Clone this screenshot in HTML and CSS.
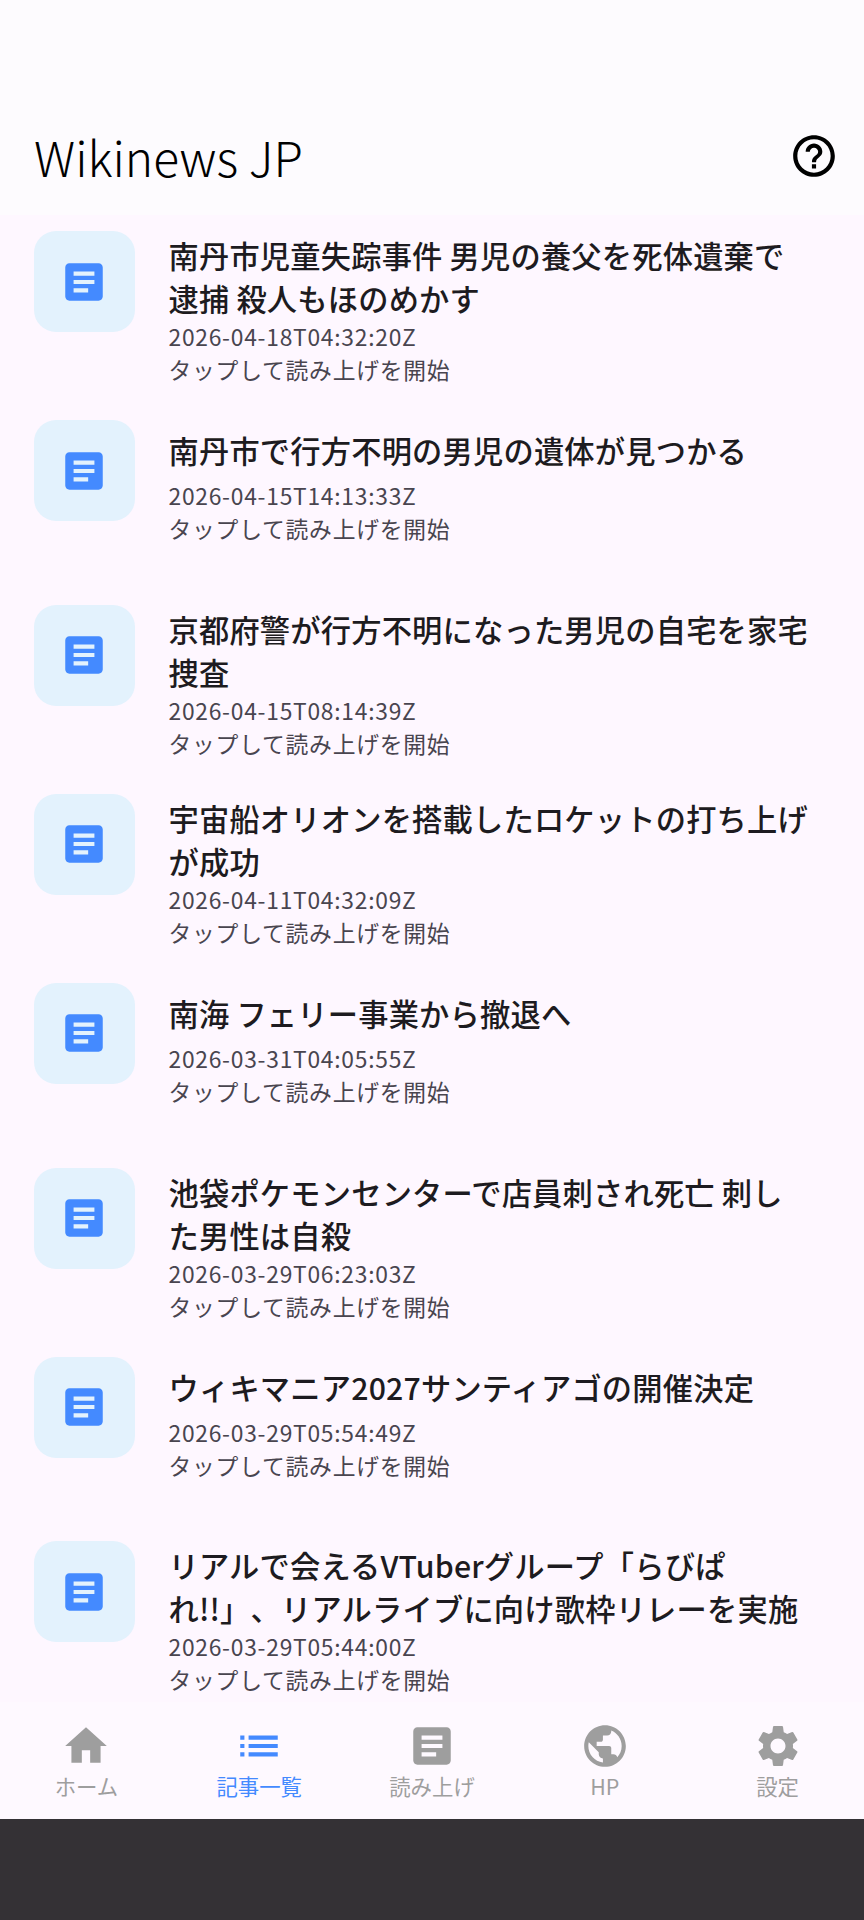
FILE: index.html
```html
<!DOCTYPE html>
<html lang="ja">
<head>
    <meta charset="UTF-8">
    <meta name="viewport" content="width=device-width, initial-scale=1.0">
    <title>Wikinews JP</title>
    <link rel="stylesheet" href="styles.css">
</head>
<body>
    <svg class="icon-defs" aria-hidden="true">
        <symbol id="icon-article" viewBox="0 0 24 24"><path d="M19 3H5c-1.1 0-2 .9-2 2v14c0 1.1.9 2 2 2h14c1.1 0 2-.9 2-2V5c0-1.1-.9-2-2-2zm-5 14H7v-2h7v2zm3-4H7v-2h10v2zm0-4H7V7h10v2z"/></symbol>
    </svg>

    <div class="app">
        <header class="app-bar">
            <h1 class="app-title">Wikinews JP</h1>
            <svg class="help-icon" viewBox="0 0 24 24"><path d="M11 18h2v-2h-2v2zm1-16C6.48 2 2 6.48 2 12s4.48 10 10 10 10-4.48 10-10S17.52 2 12 2zm0 18c-4.41 0-8-3.59-8-8s3.59-8 8-8 8 3.59 8 8-3.59 8-8 8zm0-14c-2.21 0-4 1.79-4 4h2c0-1.1.9-2 2-2s2 .9 2 2c0 2-3 1.75-3 5h2c0-2.25 3-2.5 3-5 0-2.21-1.79-4-4-4z"/></svg>
        </header>

        <main class="article-list">
            <article class="article">
                <div class="thumb"><svg class="thumb-icon"><use href="#icon-article"/></svg></div>
                <div class="article-body">
                    <h2 class="article-title">南丹市児童失踪事件 男児の養父を死体遺棄で逮捕 殺人もほのめかす</h2>
                    <p class="article-meta">2026-04-18T04:32:20Z</p>
                    <p class="article-meta">タップして読み上げを開始</p>
                </div>
            </article>
            <article class="article article-short">
                <div class="thumb"><svg class="thumb-icon"><use href="#icon-article"/></svg></div>
                <div class="article-body">
                    <h2 class="article-title">南丹市で行方不明の男児の遺体が見つかる</h2>
                    <p class="article-meta">2026-04-15T14:13:33Z</p>
                    <p class="article-meta">タップして読み上げを開始</p>
                </div>
            </article>
            <article class="article">
                <div class="thumb"><svg class="thumb-icon"><use href="#icon-article"/></svg></div>
                <div class="article-body">
                    <h2 class="article-title">京都府警が行方不明になった男児の自宅を家宅捜査</h2>
                    <p class="article-meta">2026-04-15T08:14:39Z</p>
                    <p class="article-meta">タップして読み上げを開始</p>
                </div>
            </article>
            <article class="article">
                <div class="thumb"><svg class="thumb-icon"><use href="#icon-article"/></svg></div>
                <div class="article-body">
                    <h2 class="article-title">宇宙船オリオンを搭載したロケットの打ち上げが成功</h2>
                    <p class="article-meta">2026-04-11T04:32:09Z</p>
                    <p class="article-meta">タップして読み上げを開始</p>
                </div>
            </article>
            <article class="article article-short">
                <div class="thumb"><svg class="thumb-icon"><use href="#icon-article"/></svg></div>
                <div class="article-body">
                    <h2 class="article-title">南海 フェリー事業から撤退へ</h2>
                    <p class="article-meta">2026-03-31T04:05:55Z</p>
                    <p class="article-meta">タップして読み上げを開始</p>
                </div>
            </article>
            <article class="article">
                <div class="thumb"><svg class="thumb-icon"><use href="#icon-article"/></svg></div>
                <div class="article-body">
                    <h2 class="article-title">池袋ポケモンセンターで店員刺され死亡 刺した男性は自殺</h2>
                    <p class="article-meta">2026-03-29T06:23:03Z</p>
                    <p class="article-meta">タップして読み上げを開始</p>
                </div>
            </article>
            <article class="article article-short">
                <div class="thumb"><svg class="thumb-icon"><use href="#icon-article"/></svg></div>
                <div class="article-body">
                    <h2 class="article-title">ウィキマニア2027サンティアゴの開催決定</h2>
                    <p class="article-meta">2026-03-29T05:54:49Z</p>
                    <p class="article-meta">タップして読み上げを開始</p>
                </div>
            </article>
            <article class="article">
                <div class="thumb"><svg class="thumb-icon"><use href="#icon-article"/></svg></div>
                <div class="article-body">
                    <h2 class="article-title">リアルで会えるVTuberグループ「らびぱれ!!」、リアルライブに向け歌枠リレーを実施</h2>
                    <p class="article-meta">2026-03-29T05:44:00Z</p>
                    <p class="article-meta">タップして読み上げを開始</p>
                </div>
            </article>
        </main>

        <nav class="bottom-nav">
            <a class="nav-item">
                <svg class="nav-icon" viewBox="0 0 24 24"><path d="M10 20v-6h4v6h5v-8h3L12 3 2 12h3v8z"/></svg>
                <span>ホーム</span>
            </a>
            <a class="nav-item active">
                <svg class="nav-icon" viewBox="0 0 24 24"><path d="M3 13h2v-2H3v2zm0 4h2v-2H3v2zm0-8h2V7H3v2zm4 4h14v-2H7v2zm0 4h14v-2H7v2zM7 7v2h14V7H7z"/></svg>
                <span>記事一覧</span>
            </a>
            <a class="nav-item">
                <svg class="nav-icon"><use href="#icon-article"/></svg>
                <span>読み上げ</span>
            </a>
            <a class="nav-item">
                <svg class="nav-icon" viewBox="0 0 24 24"><path d="M12 2C6.48 2 2 6.48 2 12s4.48 10 10 10 10-4.48 10-10S17.52 2 12 2zm-1 17.93c-3.95-.49-7-3.85-7-7.93 0-.62.08-1.21.21-1.79L9 15v1c0 1.1.9 2 2 2v1.93zm6.9-2.54c-.26-.81-1-1.39-1.9-1.39h-1v-3c0-.55-.45-1-1-1H8v-2h2c.55 0 1-.45 1-1V7h2c1.1 0 2-.9 2-2v-.41c2.93 1.19 5 4.06 5 7.41 0 2.08-.8 3.97-2.1 5.39z"/></svg>
                <span>HP</span>
            </a>
            <a class="nav-item">
                <svg class="nav-icon" viewBox="0 0 24 24"><path d="M19.14 12.94c.04-.3.06-.61.06-.94 0-.32-.02-.64-.07-.94l2.03-1.58c.18-.14.23-.41.12-.61l-1.92-3.32c-.12-.22-.37-.29-.59-.22l-2.39.96c-.5-.38-1.03-.7-1.62-.94l-.36-2.54c-.04-.24-.24-.41-.48-.41h-3.84c-.24 0-.43.17-.47.41l-.36 2.54c-.59.24-1.13.57-1.62.94l-2.39-.96c-.22-.08-.47 0-.59.22L2.74 8.87c-.12.21-.08.47.12.61l2.03 1.58c-.05.3-.09.63-.09.94s.02.64.07.94l-2.03 1.58c-.18.14-.23.41-.12.61l1.92 3.32c.12.22.37.29.59.22l2.39-.96c.5.38 1.03.7 1.62.94l.36 2.54c.05.24.24.41.48.41h3.84c.24 0 .44-.17.47-.41l.36-2.54c.59-.24 1.13-.56 1.62-.94l2.39.96c.22.08.47 0 .59-.22l1.92-3.32c.12-.22.07-.47-.12-.61l-2.01-1.58zM12 15.6c-1.98 0-3.6-1.62-3.6-3.6s1.62-3.6 3.6-3.6 3.6 1.62 3.6 3.6-1.62 3.6-3.6 3.6z"/></svg>
                <span>設定</span>
            </a>
        </nav>

        <div class="system-bar"></div>
    </div>
</body>
</html>
```

FILE: styles.css
```css
:root {
    --page-color: #fef7ff;
    --bar-color: #fdfbfe;
    --nav-color: #fef9ff;
    --title-color: #1d1b20;
    --meta-color: #49454f;
    --accent-color: #448aff;
    --muted-color: #9e9e9e;
}

* {
    box-sizing: border-box;
}

body {
    font-family: "Noto Sans CJK JP", "Noto Sans", sans-serif;
    text-spacing-trim: space-all;
    background-color: var(--page-color);
    margin: 0;
}

.icon-defs {
    display: none;
}

.app {
    display: flex;
    flex-direction: column;
    height: 1920px;
    overflow: hidden;
}

.app-bar {
    display: flex;
    justify-content: space-between;
    align-items: center;
    height: 215px;
    padding: 97px 25px 0 34px;
    background-color: var(--bar-color);
    flex-shrink: 0;
}

.app-title {
    font-size: 48px;
    font-weight: 300;
    line-height: 64px;
    color: #000;
    margin: 0;
}

.help-icon {
    width: 50px;
    height: 50px;
    fill: #000;
}

.article-list {
    flex: 1;
    min-height: 0;
    overflow: hidden;
    padding-top: 16px;
}

.article {
    display: flex;
    gap: 34px;
    padding: 0 34px 34px 33.5px;
}

.article-short {
    padding-bottom: 59.75px;
}

.thumb {
    display: flex;
    justify-content: center;
    align-items: center;
    width: 101px;
    height: 101px;
    background-color: #e3f2fd;
    border-radius: 22px;
    flex-shrink: 0;
}

.thumb-icon {
    width: 50px;
    height: 50px;
    fill: var(--accent-color);
}

.article-body {
    flex: 1;
    min-width: 0;
    padding: 3px 18px 0 0;
}

.article-title {
    font-size: 30.25px;
    font-weight: 500;
    letter-spacing: 0.2px;
    line-height: 43px;
    color: var(--title-color);
    margin: 0;
}

.article-short .article-title {
    padding: 6px 0 7px;
}

.article-meta {
    font-size: 22.8px;
    letter-spacing: 0.75px;
    line-height: 33px;
    color: var(--meta-color);
    margin: 0;
}

.bottom-nav {
    display: grid;
    grid-template-columns: repeat(5, 1fr);
    height: 117px;
    padding-top: 19px;
    background-color: var(--nav-color);
    flex-shrink: 0;
}

.nav-item {
    display: flex;
    flex-direction: column;
    align-items: center;
    font-size: 21.4px;
    line-height: 30px;
    color: var(--muted-color);
}

.nav-icon {
    width: 50px;
    height: 50px;
    fill: var(--muted-color);
}

.nav-item.active {
    color: var(--accent-color);
}

.nav-item.active .nav-icon {
    fill: var(--accent-color);
}

.system-bar {
    height: 101px;
    background-color: #343135;
    flex-shrink: 0;
}
```
